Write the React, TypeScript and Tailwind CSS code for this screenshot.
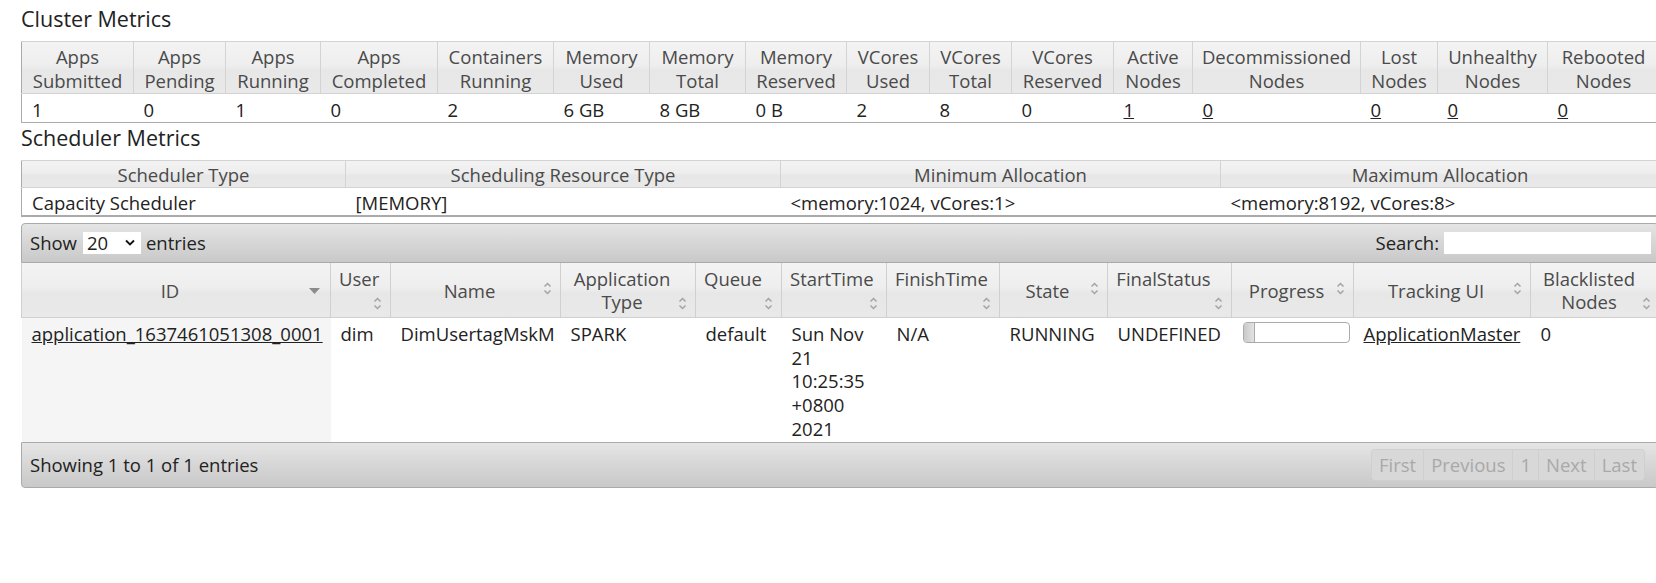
import React from 'react';

const font = { fontFamily: '"Open Sans", "Noto Sans", sans-serif' };

// up/down chevrons used by sortable columns
const SortIcon = () => (
  <svg width="9" height="15" viewBox="0 0 9 15" fill="none" stroke="#a4a4a4" strokeWidth="1.5">
    <path d="M1.5 5.5 L4.5 2.5 L7.5 5.5" />
    <path d="M1.5 9.5 L4.5 12.5 L7.5 9.5" />
  </svg>
);

const SortDesc = () => (
  <svg width="11" height="6" viewBox="0 0 11 6">
    <path d="M0 0 L11 0 L5.5 6 Z" fill="#8c8c8c" />
  </svg>
);

const clusterCols = [
  { w: 'w-[112px]', top: 'Apps', bottom: 'Submitted', val: '1' },
  { w: 'w-[92px]', top: 'Apps', bottom: 'Pending', val: '0' },
  { w: 'w-[95px]', top: 'Apps', bottom: 'Running', val: '1' },
  { w: 'w-[117px]', top: 'Apps', bottom: 'Completed', val: '0' },
  { w: 'w-[116px]', top: 'Containers', bottom: 'Running', val: '2' },
  { w: 'w-[96px]', top: 'Memory', bottom: 'Used', val: '6 GB' },
  { w: 'w-[96px]', top: 'Memory', bottom: 'Total', val: '8 GB' },
  { w: 'w-[101px]', top: 'Memory', bottom: 'Reserved', val: '0 B' },
  { w: 'w-[83px]', top: 'VCores', bottom: 'Used', val: '2' },
  { w: 'w-[82px]', top: 'VCores', bottom: 'Total', val: '8' },
  { w: 'w-[102px]', top: 'VCores', bottom: 'Reserved', val: '0' },
  { w: 'w-[79px]', top: 'Active', bottom: 'Nodes', val: '1', link: true },
  { w: 'w-[168px]', top: 'Decommissioned', bottom: 'Nodes', val: '0', link: true },
  { w: 'w-[77px]', top: 'Lost', bottom: 'Nodes', val: '0', link: true },
  { w: 'w-[110px]', top: 'Unhealthy', bottom: 'Nodes', val: '0', link: true },
  { w: 'w-[112px]', top: 'Rebooted', bottom: 'Nodes', val: '0', link: true },
];

const schedCols = [
  { w: 'w-[324px]', head: 'Scheduler Type', val: 'Capacity Scheduler' },
  { w: 'w-[435px]', head: 'Scheduling Resource Type', val: '[MEMORY]' },
  { w: 'w-[440px]', head: 'Minimum Allocation', val: '<memory:1024, vCores:1>' },
  { w: 'w-[439px]', head: 'Maximum Allocation', val: '<memory:8192, vCores:8>' },
];

type AppCol = { w: string; lines: string[]; icon: 'inline' | 'below' | 'desc' };

const appCols: AppCol[] = [
  { w: 'w-[309px]', lines: ['ID'], icon: 'desc' },
  { w: 'w-[60px]', lines: ['User', ''], icon: 'below' },
  { w: 'w-[170px]', lines: ['Name'], icon: 'inline' },
  { w: 'w-[135px]', lines: ['Application', 'Type'], icon: 'below' },
  { w: 'w-[86px]', lines: ['Queue', ''], icon: 'below' },
  { w: 'w-[105px]', lines: ['StartTime', ''], icon: 'below' },
  { w: 'w-[113px]', lines: ['FinishTime', ''], icon: 'below' },
  { w: 'w-[108px]', lines: ['State'], icon: 'inline' },
  { w: 'w-[124px]', lines: ['FinalStatus', ''], icon: 'below' },
  { w: 'w-[122px]', lines: ['Progress'], icon: 'inline' },
  { w: 'w-[177px]', lines: ['Tracking UI'], icon: 'inline' },
  { w: 'w-[129px]', lines: ['Blacklisted', 'Nodes'], icon: 'below' },
];

const headBg = 'bg-[linear-gradient(to_bottom,#f3f3f3_0%,#eeeeee_45%,#e7e7e7_55%,#e9e9e9_100%)]';
const barBg = 'bg-[linear-gradient(to_bottom,#e5e5e5_0%,#d6d6d6_50%,#c9c9c9_100%)]';

export default function App() {
  return (
    <div className="w-[1656px] h-[583px] overflow-hidden bg-white text-[18.5px] text-[#222]" style={font}>
      <div className="w-[1638px] ml-[21px]">
        <div className="h-[41px] pt-[5px] text-[21.5px] leading-[28px]">Cluster Metrics</div>

        <table className="table-fixed w-full border-collapse border border-[#aaaaaa] border-t-[#d3d3d3]">
          <colgroup>
            {clusterCols.map((c, i) => (
              <col key={i} className={c.w} />
            ))}
          </colgroup>
          <thead>
            <tr className={headBg}>
              {clusterCols.map((c, i) => (
                <th
                  key={i}
                  className="font-normal text-center text-[#4a4a4a] leading-[23.5px] pt-[3px] pb-[1px] px-0 border-r border-b border-[#d3d3d3] whitespace-nowrap"
                >
                  <div>{c.top}</div>
                  <div>{c.bottom}</div>
                </th>
              ))}
            </tr>
          </thead>
          <tbody>
            <tr>
              {clusterCols.map((c, i) => (
                <td key={i} className="px-[10px] pt-[4px] pb-0 leading-[23.5px] whitespace-nowrap">
                  {c.link ? <span className="underline">{c.val}</span> : c.val}
                </td>
              ))}
            </tr>
          </tbody>
        </table>

        <div className="h-[37px] pt-[1px] text-[21.5px] leading-[28px]">Scheduler Metrics</div>

        <table className="table-fixed w-full border-collapse border border-[#aaaaaa] border-t-[#d3d3d3] border-b-2">
          <colgroup>
            {schedCols.map((c, i) => (
              <col key={i} className={c.w} />
            ))}
          </colgroup>
          <thead>
            <tr className={headBg}>
              {schedCols.map((c, i) => (
                <th
                  key={i}
                  className="font-normal text-center text-[#4a4a4a] leading-[23.5px] pt-[2px] pb-[1px] border-r border-b border-[#d3d3d3]"
                >
                  {c.head}
                </th>
              ))}
            </tr>
          </thead>
          <tbody>
            <tr>
              {schedCols.map((c, i) => (
                <td key={i} className="px-[10px] pt-[3px] pb-0 leading-[23.5px] whitespace-nowrap">
                  {c.val}
                </td>
              ))}
            </tr>
          </tbody>
        </table>

        {/* applications datatable */}
        <div className="mt-[6px]">
          <div
            className={`h-[40px] flex items-center justify-between pl-[8px] pr-[7px] border border-[#aaaaaa] rounded-t-[4px] ${barBg}`}
          >
            <div className="flex items-center">
              <span>Show</span>
              <div className="ml-[6px] mr-[5px] w-[58px] h-[22px] bg-white flex items-center justify-between pl-[4px] pr-[6px]">
                <span className="leading-[22px]">20</span>
                <svg width="10" height="7" viewBox="0 0 10 7" fill="none" stroke="#111" strokeWidth="1.8">
                  <path d="M1 1.5 L5 5.5 L9 1.5" />
                </svg>
              </div>
              <span>entries</span>
            </div>
            <div className="flex items-center">
              <span className="mr-[5px]">Search:</span>
              <div className="w-[207px] h-[22px] bg-white" />
            </div>
          </div>

          <table className="table-fixed w-full border-collapse">
            <colgroup>
              {appCols.map((c, i) => (
                <col key={i} className={c.w} />
              ))}
            </colgroup>
            <thead>
              <tr className={headBg}>
                {appCols.map((c, i) => (
                  <th
                    key={i}
                    className="relative h-[55px] font-normal text-center text-[#4a4a4a] leading-[23.5px] pl-[8px] pr-[20px] pt-[1px] border-r border-b border-l border-[#d0d0d0] whitespace-nowrap align-middle"
                  >
                    {c.lines.map((l, j) => (
                      <div key={j} className="h-[23.5px]">
                        {l}
                      </div>
                    ))}
                    {c.icon === 'desc' && (
                      <span className="absolute right-[10px] top-[25px] flex">
                        <SortDesc />
                      </span>
                    )}
                    {c.icon === 'inline' && (
                      <span className="absolute right-[8px] top-[18px] flex">
                        <SortIcon />
                      </span>
                    )}
                    {c.icon === 'below' && (
                      <span className="absolute right-[8px] bottom-[6px] flex">
                        <SortIcon />
                      </span>
                    )}
                  </th>
                ))}
              </tr>
            </thead>
            <tbody>
              <tr className="align-top leading-[23.7px]">
                <td className="bg-[#f5f5f5] px-[10px] pt-[4px] pb-[1px] whitespace-nowrap">
                  <span className="underline">application_1637461051308_0001</span>
                </td>
                <td className="px-[10px] pt-[4px] pb-[1px]">dim</td>
                <td className="px-[10px] pt-[4px] pb-[1px] whitespace-nowrap overflow-hidden">DimUsertagMskM</td>
                <td className="px-[10px] pt-[4px] pb-[1px]">SPARK</td>
                <td className="px-[10px] pt-[4px] pb-[1px]">default</td>
                <td className="px-[10px] pt-[4px] pb-[1px]">
                  <div>Sun Nov</div>
                  <div>21</div>
                  <div>10:25:35</div>
                  <div>+0800</div>
                  <div>2021</div>
                </td>
                <td className="px-[10px] pt-[4px] pb-[1px]">N/A</td>
                <td className="px-[10px] pt-[4px] pb-[1px]">RUNNING</td>
                <td className="px-[10px] pt-[4px] pb-[1px]">UNDEFINED</td>
                <td className="pl-[11px] pr-[5px] pt-[4px] pb-[1px]">
                  <div className="w-[107px] h-[21px] border border-[#aaaaaa] rounded-[4px] bg-white overflow-hidden flex">
                    <div className="w-[11px] h-full border-r border-[#aaaaaa] bg-[linear-gradient(to_right,#c9c9c9,#e3e3e3)]" />
                  </div>
                </td>
                <td className="px-[10px] pt-[4px] pb-[1px] whitespace-nowrap">
                  <span className="underline">ApplicationMaster</span>
                </td>
                <td className="px-[10px] pt-[4px] pb-[1px]">0</td>
              </tr>
            </tbody>
          </table>

          <div
            className={`h-[46px] flex items-center justify-between pl-[8px] pr-[13px] border border-[#aaaaaa] rounded-b-[4px] ${barBg}`}
          >
            <span>Showing 1 to 1 of 1 entries</span>
            <div className="flex h-[32px] text-[#a9a9a9] bg-[#d8d8d8] border border-[#cfcfcf] rounded-[4px] leading-[30px]">
              <span className="px-[7px] border-r border-[#cfcfcf]">First</span>
              <span className="px-[7px] border-r border-[#cfcfcf]">Previous</span>
              <span className="px-[7px] border-r border-[#cfcfcf]">1</span>
              <span className="px-[7px] border-r border-[#cfcfcf]">Next</span>
              <span className="px-[7px]">Last</span>
            </div>
          </div>
        </div>
      </div>
    </div>
  );
}
